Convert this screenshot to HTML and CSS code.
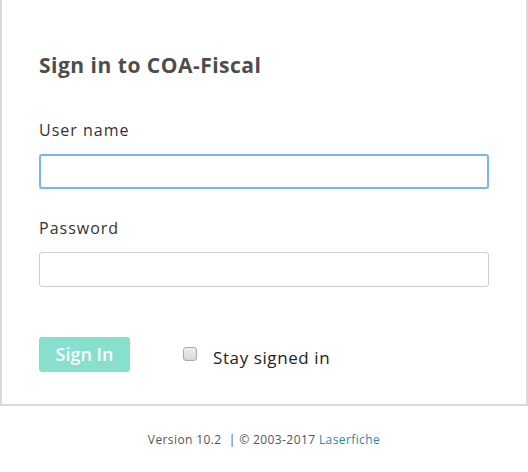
FILE: index.html
```html
<!DOCTYPE html>
<html>
<head>
<meta charset="utf-8">
<link rel="stylesheet" href="styles.css">
</head>
<body>
<div class="card">
  <h1 class="title">Sign in to COA-Fiscal</h1>
  <label class="label" for="u">User name</label>
  <div class="input focused"></div>
  <label class="label label-pw">Password</label>
  <div class="input"></div>
  <div class="actions">
    <div class="btn">Sign In</div>
    <div class="check"><span class="box"></span><span class="check-text">Stay signed in</span></div>
  </div>
</div>
<div class="footer">Version 10.2 &nbsp;| © 2003-2017 <span class="brand">Laserfiche</span></div>
</body>
</html>
```
FILE: styles.css
```css
html, body { margin: 0; padding: 0; background: #fff; }
body { font-family: "Open Sans", "Liberation Sans", sans-serif; width: 528px; }
.card {
  border: 2px solid #dadada;
  border-top: none;
  padding: 51px 37px 32px 37px;
  box-sizing: border-box;
  width: 528px;
}
.title {
  margin: 0;
  font-size: 21px;
  line-height: 28px;
  font-weight: 700;
  color: #4d4d4d;
  letter-spacing: 0.5px;
}
.label {
  display: block;
  margin-top: 40px;
  font-size: 16px;
  line-height: 22px;
  color: #333;
  letter-spacing: 1px;
}
.label-pw { margin-top: 28px; }
.input {
  margin-top: 13px;
  width: 450px;
  height: 35px;
  box-sizing: border-box;
  border: 1px solid #cfcfcf;
  border-radius: 3px;
}
.input.focused {
  border: 2px solid #76b6f5;
}
.actions {
  display: flex;
  align-items: center;
  margin-top: 50px;
}
.btn {
  width: 91px;
  height: 35px;
  box-sizing: border-box;
  background: #87e0ce;
  border-radius: 3px;
  color: #fff;
  font-size: 18px;
  font-weight: 600;
  line-height: 35px;
  text-align: center;
}
.check {
  display: flex;
  align-items: center;
  margin-left: 53px;
  margin-top: 6px;
}
.box {
  width: 14px;
  height: 14px;
  box-sizing: border-box;
  border: 1px solid #a9a9a9;
  border-radius: 3px;
  background: linear-gradient(#eeeeee, #d6d6d6);
  margin-top: -7px;
}
.check-text {
  margin-left: 16px;
  font-size: 17px;
  color: #222;
  line-height: 24px;
  letter-spacing: 0.6px;
}
.footer {
  text-align: center;
  margin-top: 26px;
  font-size: 12px;
  line-height: 16px;
  color: #555;
  letter-spacing: 0.4px;
}
.brand { color: #2b8a9c; }
```
